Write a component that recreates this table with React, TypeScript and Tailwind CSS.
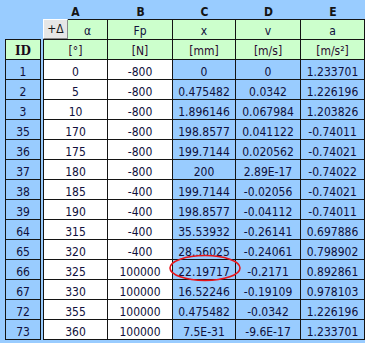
import React from "react";

const rows: [string, string, string, string, string, string][] = [
  ["1", "0", "-800", "0", "0", "1.233701"],
  ["2", "5", "-800", "0.475482", "0.0342", "1.226196"],
  ["3", "10", "-800", "1.896146", "0.067984", "1.203826"],
  ["35", "170", "-800", "198.8577", "0.041122", "-0.74011"],
  ["36", "175", "-800", "199.7144", "0.020562", "-0.74021"],
  ["37", "180", "-800", "200", "2.89E-17", "-0.74022"],
  ["38", "185", "-400", "199.7144", "-0.02056", "-0.74021"],
  ["39", "190", "-400", "198.8577", "-0.04112", "-0.74011"],
  ["64", "315", "-400", "35.53932", "-0.26141", "0.697886"],
  ["65", "320", "-400", "28.56025", "-0.24061", "0.798902"],
  ["66", "325", "100000", "22.19717", "-0.2171", "0.892861"],
  ["67", "330", "100000", "16.52246", "-0.19109", "0.978103"],
  ["72", "355", "100000", "0.475482", "-0.0342", "1.226196"],
  ["73", "360", "100000", "7.5E-31", "-9.6E-17", "1.233701"],
];

const font = { fontFamily: '"DejaVu Sans Condensed", "Liberation Sans", sans-serif' };

export default function App() {
  return (
    <div
      className="relative w-[365px] h-[343px] bg-[#99ccff] text-[12px] leading-[14px] text-[#10103c] overflow-hidden"
      style={font}
    >
      <div className="flex">
        <div className="w-[5px] shrink-0" />
        {/* ID column */}
        <div className="mt-[39px] w-[36px] shrink-0 flex flex-col">
          <div
            className="h-[21px] border border-[#141414] bg-[#ccffcc] flex items-end justify-center pb-[1px] font-bold text-[12px] text-[#1a0a1a]"
            style={{ fontFamily: '"DejaVu Serif", "Liberation Serif", serif' }}
          >
            ID
          </div>
          {rows.map((r) => (
            <div
              key={r[0]}
              className="h-[20px] border-x border-b border-[#141414] bg-[#99ccff] flex items-end justify-center"
            >
              {r[0]}
            </div>
          ))}
        </div>
        <div className="w-[2px] shrink-0" />
        {/* Main table */}
        <div className="w-[322px] shrink-0 flex flex-col">
          {/* column letters */}
          <div className="h-[19px] flex font-bold text-[12px] text-[#141414]">
            <div className="w-[65px] flex items-end justify-center">A</div>
            <div className="w-[65px] flex items-end justify-center">B</div>
            <div className="w-[63px] flex items-end justify-center">C</div>
            <div className="w-[65px] flex items-end justify-center">D</div>
            <div className="w-[64px] flex items-end justify-center">E</div>
          </div>
          {/* names row */}
          <div className="h-[21px] flex">
            <div className="w-[25px] h-[21px] border-b border-[#141414]">
              <div className="h-[20px] bg-[#e6e6e6] border-t border-l border-t-white border-l-white border-r border-b border-r-[#8a8a8a] border-b-[#8a8a8a] flex items-center justify-center text-[#141414]">
                +Δ
              </div>
            </div>
            <div className="w-[40px] border-y border-r border-[#141414] bg-[#ccffcc] flex items-end justify-center pb-[1px]">α</div>
            <div className="w-[65px] border-y border-r border-[#141414] bg-[#ccffcc] flex items-end justify-center pb-[1px]">Fp</div>
            <div className="w-[63px] border-y border-r border-[#141414] bg-[#ccffcc] flex items-end justify-center pb-[1px]">x</div>
            <div className="w-[65px] border-y border-r border-[#141414] bg-[#ccffcc] flex items-end justify-center pb-[1px]">v</div>
            <div className="w-[64px] border-y border-r border-[#141414] bg-[#ccffcc] flex items-end justify-center pb-[1px]">a</div>
          </div>
          {/* units row */}
          <div className="h-[20px] flex text-[#2a0a30]">
            <div className="w-[65px] border-l border-r border-b border-[#141414] bg-[#ccffcc] flex items-end justify-center pb-[1px]">[°]</div>
            <div className="w-[65px] border-r border-b border-[#141414] bg-[#ccffcc] flex items-end justify-center pb-[1px]">[N]</div>
            <div className="w-[63px] border-r border-b border-[#141414] bg-[#ccffcc] flex items-end justify-center pb-[1px]">[mm]</div>
            <div className="w-[65px] border-r border-b border-[#141414] bg-[#ccffcc] flex items-end justify-center pb-[1px]">[m/s]</div>
            <div className="w-[64px] border-r border-b border-[#141414] bg-[#ccffcc] flex items-end justify-center pb-[1px]">[m/s²]</div>
          </div>
          {rows.map((r) => (
            <div key={r[0]} className="h-[20px] flex">
              <div className="w-[65px] border-l border-r border-b border-[#141414] bg-white flex items-end justify-center">{r[1]}</div>
              <div className="w-[65px] border-r border-b border-[#141414] bg-white flex items-end justify-center">{r[2]}</div>
              <div className="w-[63px] border-r border-b border-[#141414] bg-[#99ccff] flex items-end justify-center">{r[3]}</div>
              <div className="w-[65px] border-r border-b border-[#141414] bg-[#99ccff] flex items-end justify-center">{r[4]}</div>
              <div className="w-[64px] border-r border-b border-[#141414] bg-[#99ccff] flex items-end justify-center">{r[5]}</div>
            </div>
          ))}
        </div>
      </div>
      <svg className="absolute left-0 top-0" width="365" height="343" viewBox="0 0 365 343">
        <ellipse cx="205" cy="268" rx="35" ry="12.5" fill="none" stroke="#e8161b" strokeWidth="1.6" />
      </svg>
    </div>
  );
}
